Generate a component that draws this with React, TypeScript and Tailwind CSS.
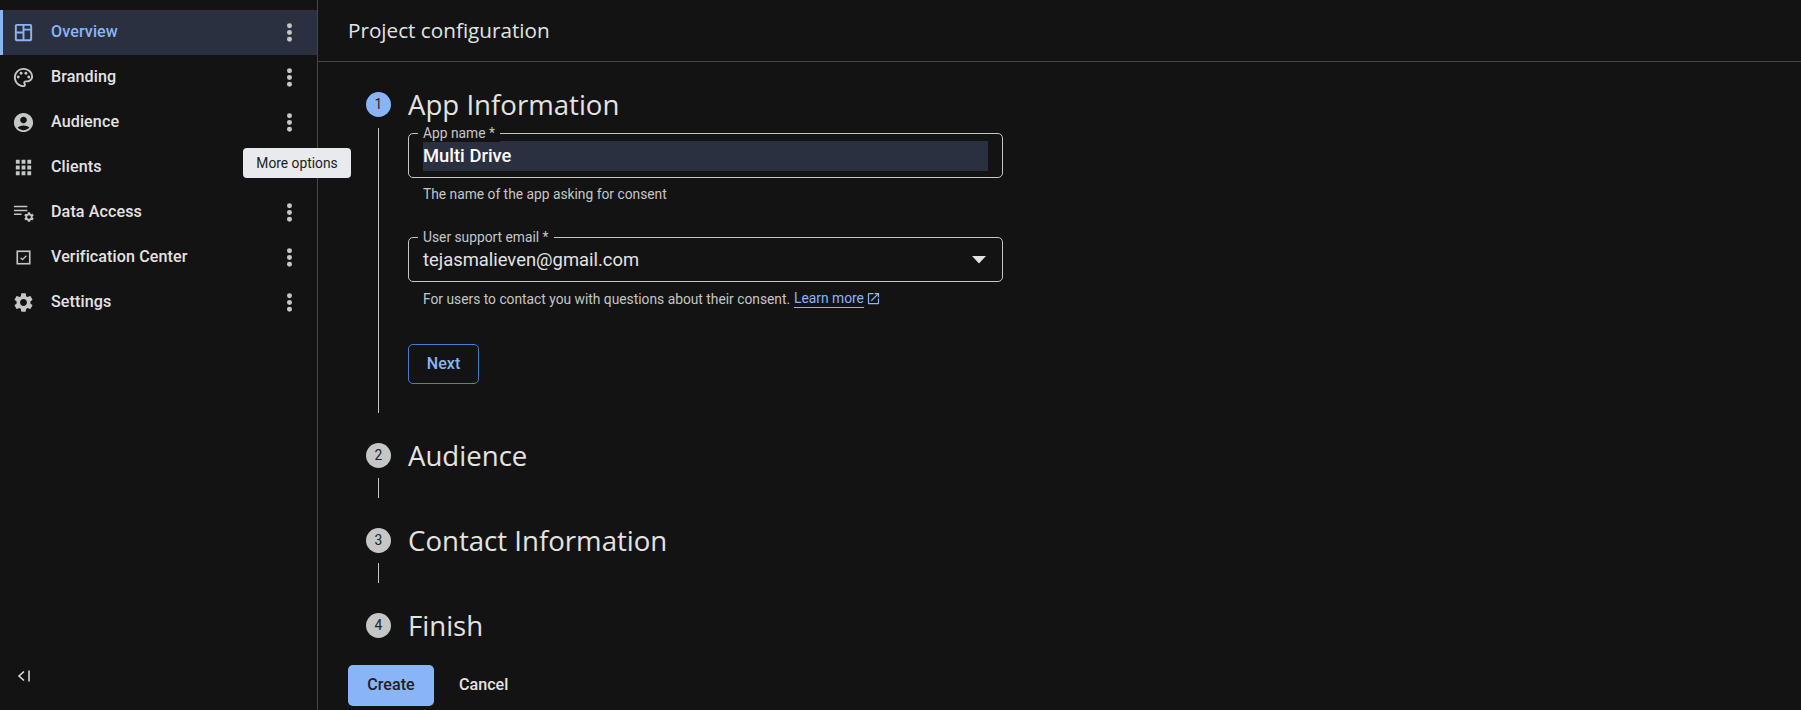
import React from "react";

const settingsPath =
  "M19.14 12.94c.04-.3.06-.61.06-.94 0-.32-.02-.64-.07-.94l2.03-1.58c.18-.14.23-.41.12-.61l-1.92-3.32c-.12-.22-.37-.29-.59-.22l-2.39.96c-.5-.38-1.03-.7-1.62-.94l-.36-2.54c-.04-.24-.24-.41-.48-.41h-3.84c-.24 0-.43.17-.47.41l-.36 2.54c-.59.24-1.13.57-1.62.94l-2.39-.96c-.22-.08-.47 0-.59.22L2.74 8.87c-.12.21-.08.47.12.61l2.03 1.58c-.05.3-.09.63-.09.94s.02.64.07.94l-2.03 1.58c-.18.14-.23.41-.12.61l1.92 3.32c.12.22.37.29.59.22l2.39-.96c.5.38 1.03.7 1.62.94l.36 2.54c.05.24.24.41.48.41h3.84c.24 0 .44-.17.47-.41l.36-2.54c.59-.24 1.13-.56 1.62-.94l2.39.96c.22.08.47 0 .59-.22l1.92-3.32c.12-.22.07-.47-.12-.61l-2.01-1.58zM12 15.6c-1.98 0-3.6-1.62-3.6-3.6s1.62-3.6 3.6-3.6 3.6 1.62 3.6 3.6-1.62 3.6-3.6 3.6z";

function OverviewIcon() {
  return (
    <svg width="23" height="23" viewBox="0 0 24 24" fill="currentColor">
      <path
        fillRule="evenodd"
        d="M5 3h14a2 2 0 0 1 2 2v14a2 2 0 0 1-2 2H5a2 2 0 0 1-2-2V5a2 2 0 0 1 2-2zM5 5v6h6V5H5zm8 0v3h6V5h-6zm0 5v9h6v-9h-6zM5 13v6h6v-6H5z"
      />
    </svg>
  );
}

function PaletteIcon() {
  return (
    <svg width="23" height="23" viewBox="0 0 24 24" fill="currentColor">
      <path d="M12 22C6.49 22 2 17.51 2 12S6.49 2 12 2s10 4.04 10 9c0 3.31-2.69 6-6 6h-1.77c-.28 0-.5.22-.5.5 0 .12.05.23.13.33.41.47.64 1.06.64 1.67 0 1.38-1.12 2.5-2.5 2.5zm0-18c-4.41 0-8 3.59-8 8s3.59 8 8 8c.28 0 .5-.22.5-.5 0-.16-.08-.28-.14-.35-.41-.46-.63-1.05-.63-1.65 0-1.38 1.12-2.5 2.5-2.5H16c2.21 0 4-1.79 4-4 0-3.86-3.59-7-8-7z" />
      <circle cx="6.5" cy="11.5" r="1.5" />
      <circle cx="9.5" cy="7.5" r="1.5" />
      <circle cx="14.5" cy="7.5" r="1.5" />
      <circle cx="17.5" cy="11.5" r="1.5" />
    </svg>
  );
}

function AudienceIcon() {
  return (
    <svg width="23" height="23" viewBox="0 0 24 24" fill="currentColor">
      <path d="M12 2C6.48 2 2 6.48 2 12s4.48 10 10 10 10-4.48 10-10S17.52 2 12 2zm0 4c1.93 0 3.5 1.57 3.5 3.5S13.93 13 12 13s-3.5-1.57-3.5-3.5S10.07 6 12 6zm0 14c-2.03 0-4.43-.82-6.14-2.88C7.55 15.8 9.68 15 12 15s4.45.8 6.14 2.12C16.43 19.18 14.03 20 12 20z" />
    </svg>
  );
}

function ClientsIcon() {
  return (
    <svg width="23" height="23" viewBox="0 0 24 24" fill="currentColor">
      <path d="M4 8h4V4H4v4zm6 12h4v-4h-4v4zm-6 0h4v-4H4v4zm0-6h4v-4H4v4zm6 0h4v-4h-4v4zm6-10v4h4V4h-4zm-6 4h4V4h-4v4zm6 6h4v-4h-4v4zm0 6h4v-4h-4v4z" />
    </svg>
  );
}

function DataAccessIcon() {
  return (
    <svg width="23" height="23" viewBox="0 0 24 24" fill="currentColor">
      <path d="M2 5h14v1.6H2zM2 9h14v1.6H2zM2 13h8v1.6H2z" />
      <g transform="translate(11.5 10.5) scale(0.52)">
        <path d={settingsPath} />
      </g>
    </svg>
  );
}

function VerificationIcon() {
  return (
    <svg width="23" height="23" viewBox="0 0 24 24" fill="none" stroke="currentColor">
      <rect x="5.5" y="5.5" width="13" height="13" strokeWidth="1.7" />
      <path d="M9 12.2l2 2 4-4" strokeWidth="1.4" />
    </svg>
  );
}

function SettingsIcon() {
  return (
    <svg width="23" height="23" viewBox="0 0 24 24" fill="currentColor">
      <path d={settingsPath} />
    </svg>
  );
}

function MoreDots() {
  return (
    <svg width="23" height="23" viewBox="0 0 24 24" fill="#c4c7c5">
      <circle cx="12" cy="5" r="2.6" />
      <circle cx="12" cy="12" r="2.6" />
      <circle cx="12" cy="19" r="2.6" />
    </svg>
  );
}

const navItems = [
  { label: "Overview", icon: <OverviewIcon />, active: true },
  { label: "Branding", icon: <PaletteIcon /> },
  { label: "Audience", icon: <AudienceIcon /> },
  { label: "Clients", icon: <ClientsIcon />, hideMore: true },
  { label: "Data Access", icon: <DataAccessIcon /> },
  { label: "Verification Center", icon: <VerificationIcon /> },
  { label: "Settings", icon: <SettingsIcon /> },
];

function Sidebar() {
  return (
    <aside className="relative flex h-full w-[318px] shrink-0 flex-col justify-between border-r border-[#444746] pt-[10px]">
      <nav className="flex flex-col">
        {navItems.map((item) => (
          <div
            key={item.label}
            className={
              item.active
                ? "flex h-[45px] items-center border-l-[3px] border-[#8ab4f8] bg-[#2a3040] pl-[9px] pr-[8px] text-[#8ab4f8]"
                : "flex h-[45px] items-center pl-[12px] pr-[8px] text-[#e3e3e3]"
            }
          >
            <span className={item.active ? "flex w-[39px] shrink-0 text-[#8ab4f8]" : "flex w-[39px] shrink-0 text-[#c4c7c5]"}>
              {item.icon}
            </span>
            <span className="flex-1 text-[16.1px] font-medium tracking-[0.1px]">{item.label}</span>
            {!item.hideMore && (
              <span className="mr-[8px] flex">
                <MoreDots />
              </span>
            )}
          </div>
        ))}
      </nav>
      <div className="flex h-[50px] items-start pl-[16px] pt-[8px] text-[#e3e3e3]">
        <svg width="16" height="16" viewBox="0 0 16 16" fill="none" stroke="currentColor" strokeWidth="1.5">
          <path d="M8 3.5L3 8l5 4.5" />
          <path d="M13 2.5v11" />
        </svg>
      </div>
      {/* tooltip sits over the sidebar edge */}
      <div className="absolute left-[243px] top-[148px] z-10 flex h-[30px] w-[108px] items-center justify-center rounded-[4px] bg-[#e8eaed] text-[13.8px] text-[#202124]">
        More options
      </div>
    </aside>
  );
}

function Field({ label, children }: { label: string; children: React.ReactNode }) {
  return (
    <div className="relative h-[45px] w-[595px] rounded-[5px] border border-[#c4c7c5] pl-[14px] pr-[14px]">
      <span className="absolute left-[9px] top-[-10px] bg-[#131314] px-[5px] text-[13.8px] leading-[18px] text-[#c4c7c5]">
        {label}
      </span>
      {children}
    </div>
  );
}

function StepBadge({ n, active }: { n: number; active?: boolean }) {
  return (
    <span
      className={
        active
          ? "flex h-[25px] w-[25px] shrink-0 items-center justify-center rounded-full bg-[#8ab4f8] text-[13.8px] text-[#202124]"
          : "flex h-[25px] w-[25px] shrink-0 items-center justify-center rounded-full bg-[#c4c7c5] text-[13.8px] text-[#202124]"
      }
    >
      {n}
    </span>
  );
}

function StepHead({ n, title, active }: { n: number; title: string; active?: boolean }) {
  return (
    <div className="flex h-[36px] items-center">
      <StepBadge n={n} active={active} />
      <h2 className="ml-[17px] font-['Open_Sans',sans-serif] text-[27.6px] leading-[36px] text-[#e3e3e3]">{title}</h2>
    </div>
  );
}

function CollapsedStep({ n, title, line }: { n: number; title: string; line?: boolean }) {
  return (
    <div className="flex h-[85px] flex-col">
      <StepHead n={n} title={title} />
      {line && <div className="ml-[12px] mt-[5px] h-[20px] w-px bg-[#c4c7c5]" />}
    </div>
  );
}

export default function App() {
  return (
    <div className="flex h-screen w-full overflow-hidden bg-[#131314] font-['Roboto',sans-serif] text-[#e3e3e3]">
      <Sidebar />
      <main className="min-w-0 flex-1">
        <header className="flex h-[62px] items-center border-b border-[#444746] pl-[30px]">
          <h1 className="font-['Open_Sans',sans-serif] text-[20.7px] text-[#e3e3e3]">Project configuration</h1>
        </header>
        <div className="pl-[30px]">
          <div className="ml-[18px] pt-[24px]">
            <StepHead n={1} title="App Information" active />
            <div className="flex">
              <div className="ml-[12px] mt-[6px] h-[285px] w-px bg-[#c4c7c5]" />
              <div className="ml-[29px] pt-[11px]">
                <Field label="App name *">
                  <div className="mt-[7px] flex h-[30px] items-center bg-[#2a3040] text-[18.4px] font-medium text-white">
                    Multi Drive
                  </div>
                </Field>
                <p className="ml-[15px] mt-[7px] text-[13.8px] leading-[18px] text-[#c4c7c5]">
                  The name of the app asking for consent
                </p>
                <div className="mt-[34px]">
                  <Field label="User support email *">
                    <div className="flex h-full items-center justify-between text-[18.4px] text-[#e3e3e3]">
                      <span>tejasmalieven@gmail.com</span>
                      <svg width="14" height="8" viewBox="0 0 14 8" fill="#e3e3e3" className="mr-[2px]">
                        <path d="M0 0h14L7 7.5z" />
                      </svg>
                    </div>
                  </Field>
                </div>
                <p className="ml-[15px] mt-[7px] flex items-center text-[13.8px] leading-[18px] text-[#c4c7c5]">
                  For users to contact you with questions about their consent.
                  <span className="ml-[4px] border-b border-[#8ab4f8] text-[#8ab4f8]">Learn more</span>
                  <svg width="15" height="15" viewBox="0 0 24 24" fill="#8ab4f8" className="ml-[2px]">
                    <path d="M19 19H5V5h7V3H5c-1.11 0-2 .9-2 2v14c0 1.1.89 2 2 2h14c1.1 0 2-.9 2-2v-7h-2v7zM14 3v2h3.59l-9.83 9.83 1.41 1.41L19 6.41V10h2V3h-7z" />
                  </svg>
                </p>
                <button className="mt-[36px] h-[40px] w-[71px] rounded-[5px] border border-[#4a7fd0] text-[16.1px] font-medium text-[#8ab4f8]">
                  Next
                </button>
              </div>
            </div>
          </div>
          <div className="ml-[18px] mt-[24px]">
            <CollapsedStep n={2} title="Audience" line />
            <CollapsedStep n={3} title="Contact Information" line />
            <CollapsedStep n={4} title="Finish" />
          </div>
          <div className="-mt-[27px] flex items-start">
            <button className="h-[41px] w-[86px] rounded-[5px] bg-[#8ab4f8] text-[16.1px] font-medium text-[#202124]">
              Create
            </button>
            <button className="ml-[25px] h-[41px] text-[16.1px] font-medium text-[#e3e3e3]">Cancel</button>
          </div>
        </div>
      </main>
    </div>
  );
}
